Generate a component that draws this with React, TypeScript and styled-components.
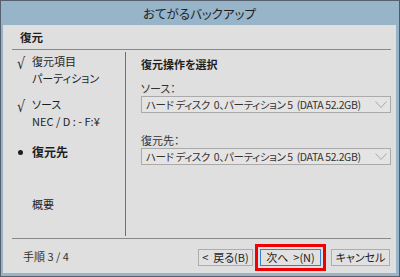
import styled, { createGlobalStyle, css } from "styled-components";

const GlobalStyle = createGlobalStyle`
  body {
    margin: 0;
    background: #ffffff;
    font-family: "Noto Sans CJK JP", "Noto Sans", sans-serif;
    font-feature-settings: "palt";
  }
`;

type MarkKind = "check" | "dot" | "none";

const steps: { mark: MarkKind; title: string; sub: string; top: number }[] = [
  { mark: "check", title: "復元項目", sub: "パーティション", top: 1 },
  { mark: "check", title: "ソース", sub: "NEC / D : - F:¥", top: 10 },
  { mark: "dot", title: "復元先", sub: "", top: 15 },
  { mark: "none", title: "概要", sub: "", top: 36 },
];

const selects = [
  { label: "ソース：", value: "ハード ディスク  0、パーティション 5  (DATA 52.2GB)" },
  { label: "復元先：", value: "ハード ディスク  0、パーティション 5  (DATA 52.2GB)" },
];

const App = () => {
  return (
    <>
      <GlobalStyle />
      <Window>
        <TitleBar>おてがるバックアップ</TitleBar>
        <Body>
          <Header>復元</Header>
          <Divider />
          <Main>
            <StepList>
              {steps.map((s) => (
                <Step key={s.title} $top={s.top}>
                  <Mark>{s.mark === "check" ? <Check>√</Check> : s.mark === "dot" ? <Dot /> : null}</Mark>
                  <StepText>
                    <StepTitle $current={s.mark === "dot"}>{s.title}</StepTitle>
                    {s.sub && <StepSub>{s.sub}</StepSub>}
                  </StepText>
                </Step>
              ))}
            </StepList>
            <Panel>
              <PanelTitle>復元操作を選択</PanelTitle>
              {selects.map((s) => (
                <Field key={s.label}>
                  <FieldLabel>{s.label}</FieldLabel>
                  <SelectBox>
                    <SelectValue>{s.value}</SelectValue>
                    <svg width="12" height="8" viewBox="0 0 12 8">
                      <path d="M0.5 0.5 L6 6.5 L11.5 0.5" fill="none" stroke="#a8a8a8" strokeWidth="1" />
                    </svg>
                  </SelectBox>
                </Field>
              ))}
            </Panel>
          </Main>
          <Divider />
          <Footer>
            <StepCount>手順 3 / 4</StepCount>
            <Buttons>
              <Button $width={55}>&lt;&nbsp; 戻る(B)</Button>
              <Highlight>
                <Button $width={61} $default>次へ &nbsp;&gt;(N)</Button>
              </Highlight>
              <Button $width={59}>キャンセル</Button>
            </Buttons>
          </Footer>
        </Body>
      </Window>
    </>
  );
};

const Window = styled.div`
  width: 400px;
  height: 277px;
  box-sizing: border-box;
  border: 1px solid #56606e;
  border-right-color: #3f5f82;
  background: #97b4c8;
  padding: 0 3px 3px 2px;
  display: flex;
  flex-direction: column;
`;

const TitleBar = styled.div`
  height: 24px;
  display: flex;
  align-items: center;
  justify-content: center;
  font-size: 12.5px;
  color: #1e1e1e;
  padding-top: 1px;
  box-sizing: border-box;
`;

const Body = styled.div`
  flex: 1;
  background: #dfdfdf;
  display: flex;
  flex-direction: column;
  color: #1e1e1e;
  font-size: 11px;
`;

const Header = styled.div`
  height: 24px;
  display: flex;
  align-items: center;
  padding-left: 17px;
  font-weight: 700;
  font-size: 11.5px;
`;

const Divider = styled.div`
  height: 1px;
  background: #8a8a8a;
  margin: 0 5px 0 9px;
`;

const Main = styled.div`
  height: 188px;
  display: flex;
`;

const StepList = styled.div`
  width: 114px;
  flex-shrink: 0;
  box-sizing: border-box;
  margin: 2px 0 2px 9px;
  border-right: 1px solid #707070;
  display: flex;
  flex-direction: column;
`;

const Step = styled.div<{ $top: number }>`
  display: flex;
  margin-top: ${(p) => p.$top}px;
`;

const Mark = styled.div`
  width: 20px;
  flex-shrink: 0;
  padding-left: 5px;
  box-sizing: border-box;
  display: flex;
  align-items: flex-start;
`;

const Check = styled.span`
  font-family: "DejaVu Sans", sans-serif;
  font-size: 16px;
  line-height: 16px;
  margin-top: 3px;
  color: #2a2a2a;
  transform: scaleX(0.8);
  transform-origin: left center;
`;

const Dot = styled.span`
  width: 5px;
  height: 5px;
  border-radius: 50%;
  background: #1e1e1e;
  margin: 6px 0 0 1px;
`;

const StepText = styled.div`
  display: flex;
  flex-direction: column;
`;

const StepTitle = styled.div<{ $current: boolean }>`
  line-height: 16px;
  ${(p) =>
    p.$current &&
    css`
      font-weight: 700;
      font-size: 12px;
    `}
`;

const StepSub = styled.div`
  line-height: 16px;
  padding-top: 1px;
`;

const Panel = styled.div`
  flex: 1;
  min-width: 0;
  padding: 6px 5px 0 15px;
  display: flex;
  flex-direction: column;
`;

const PanelTitle = styled.div`
  font-weight: 700;
  line-height: 16px;
  margin-bottom: 8px;
`;

const Field = styled.div`
  display: flex;
  flex-direction: column;
  margin-bottom: 19px;
`;

const FieldLabel = styled.div`
  line-height: 16px;
  color: #333;
`;

const SelectBox = styled.div`
  height: 17px;
  box-sizing: border-box;
  border: 1px solid #aaaaaa;
  background: #e4e4e4;
  display: flex;
  align-items: center;
  justify-content: space-between;
  padding: 0 3px 0 4px;
  color: #333;
`;

const SelectValue = styled.span`
  white-space: pre;
  font-size: 10.5px;
  letter-spacing: -0.4px;
`;

const Footer = styled.div`
  flex: 1;
  display: flex;
  align-items: center;
  justify-content: space-between;
  padding: 0 6px 0 20px;
`;

const StepCount = styled.div`
  color: #333;
`;

const Buttons = styled.div`
  display: flex;
  align-items: center;
  gap: 2px;
  margin-top: 2px;
`;

const Button = styled.button<{ $width: number; $default?: boolean }>`
  width: ${(p) => p.$width}px;
  height: 17px;
  padding: 0;
  font: inherit;
  font-size: 11px;
  line-height: 15px;
  color: #1e1e1e;
  background: #e1e1e1;
  border: 1px solid ${(p) => (p.$default ? "#3b7fd0" : "#adadad")};
  white-space: pre;
`;

const Highlight = styled.div`
  border: 3px solid #f00000;
  padding: 2px;
  margin-right: 3px;
  display: flex;
`;

export default App;
